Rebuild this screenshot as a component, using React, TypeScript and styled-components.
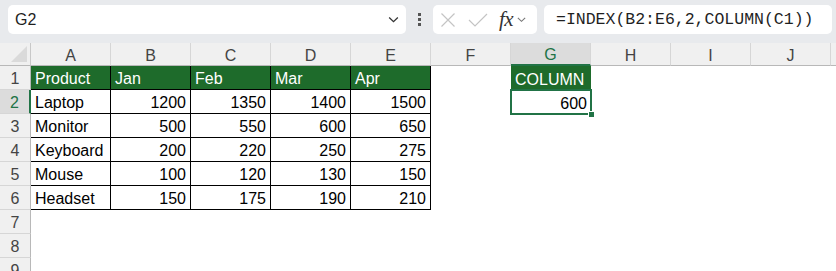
import styled, { createGlobalStyle } from "styled-components";

const GREEN = "#1e6b2b";
const SELECT = "#217346";

const GlobalStyle = createGlobalStyle`
  html, body {
    margin: 0;
    padding: 0;
    background: #ffffff;
  }
  body {
    font-family: "Liberation Sans", Arial, sans-serif;
    overflow: hidden;
  }
`;

const columns = ["A", "B", "C", "D", "E", "F", "G", "H", "I", "J"];

const data: (string | number)[][] = [
  ["Product", "Jan", "Feb", "Mar", "Apr"],
  ["Laptop", 1200, 1350, 1400, 1500],
  ["Monitor", 500, 550, 600, 650],
  ["Keyboard", 200, 220, 250, 275],
  ["Mouse", 100, 120, 130, 150],
  ["Headset", 150, 175, 190, 210],
];

const Page = styled.div`
  width: 836px;
  height: 271px;
  display: flex;
  flex-direction: column;
  overflow: hidden;
`;

const Toolbar = styled.div`
  height: 43px;
  flex-shrink: 0;
  background: #e8eaed;
  display: flex;
  align-items: flex-start;
  padding: 5px 0 0 8px;
  box-sizing: border-box;
`;

const Box = styled.div<{ $width: number }>`
  width: ${({ $width }) => $width}px;
  height: 29px;
  background: #ffffff;
  border-radius: 5px;
  box-sizing: border-box;
  display: flex;
  align-items: center;
  flex-shrink: 0;
`;

const NameText = styled.span`
  font-size: 16px;
  color: #1f1f1f;
  padding-left: 7px;
  flex: 1;
`;

const Grip = styled.div`
  width: 27px;
  display: flex;
  flex-direction: column;
  align-items: center;
  justify-content: center;
  gap: 2px;
  height: 29px;
  span {
    width: 3px;
    height: 3px;
    background: #555;
  }
`;

const Fx = styled.span`
  font-family: "Liberation Serif", "Times New Roman", serif;
  font-style: italic;
  font-size: 21px;
  color: #333;
  margin-left: 11px;
  letter-spacing: -0.5px;
`;

const FormulaText = styled.span`
  font-family: "Liberation Mono", "Courier New", monospace;
  font-size: 16.5px;
  color: #1f1f1f;
  padding-left: 12px;
  white-space: nowrap;
`;

const Sheet = styled.div`
  display: grid;
  grid-template-columns: 31px repeat(10, 80px) 1fr;
  grid-template-rows: 23px repeat(9, 24px);
  flex: none;
`;

const Corner = styled.div`
  background: #f0f0f0;
  border-right: 1px solid #c8c8c8;
  border-bottom: 1px solid #b8b8b8;
  box-sizing: border-box;
  position: relative;
  &::after {
    content: "";
    position: absolute;
    right: 3px;
    bottom: 3px;
    width: 0;
    height: 0;
    border-left: 16px solid transparent;
    border-bottom: 16px solid #dadada;
  }
`;

const ColHead = styled.div<{ $active?: boolean }>`
  background: ${({ $active }) => ($active ? "#dcdcdc" : "#f0f0f0")};
  color: ${({ $active }) => ($active ? SELECT : "#444")};
  border-right: 1px solid #d6d6d6;
  border-bottom: ${({ $active }) =>
    $active ? `2px solid ${SELECT}` : "1px solid #b8b8b8"};
  box-sizing: border-box;
  font-size: 16px;
  display: flex;
  align-items: center;
  justify-content: center;
  padding-top: 3px;
`;

const RowHead = styled.div<{ $active?: boolean }>`
  background: ${({ $active }) => ($active ? "#dcdcdc" : "#f0f0f0")};
  color: ${({ $active }) => ($active ? SELECT : "#444")};
  border-right: ${({ $active }) =>
    $active ? `2px solid ${SELECT}` : "1px solid #b8b8b8"};
  border-bottom: 1px solid #d6d6d6;
  box-sizing: border-box;
  font-size: 16px;
  display: flex;
  align-items: center;
  justify-content: center;
  padding-top: 2px;
`;

const Cell = styled.div<{ $kind: "head" | "data" | "empty"; $num?: boolean }>`
  box-sizing: border-box;
  font-size: 16px;
  display: flex;
  align-items: center;
  padding: 3px 4px 0 4px;
  white-space: nowrap;
  justify-content: ${({ $num }) => ($num ? "flex-end" : "flex-start")};
  background: ${({ $kind }) => ($kind === "head" ? GREEN : "#ffffff")};
  color: ${({ $kind }) => ($kind === "head" ? "#ffffff" : "#000000")};
  border-right: ${({ $kind }) =>
    $kind === "empty" ? "none" : "1px solid #000"};
  border-bottom: ${({ $kind }) =>
    $kind === "empty" ? "none" : "1px solid #000"};
`;

const ResultHead = styled(Cell)`
  border: none;
`;

const Selected = styled(Cell)`
  position: relative;
  border: none;
  &::after {
    content: "";
    position: absolute;
    top: -1px;
    left: -1px;
    right: -1px;
    bottom: -1px;
    border: 2px solid ${SELECT};
  }
  &::before {
    content: "";
    position: absolute;
    right: -4px;
    bottom: -4px;
    width: 5px;
    height: 5px;
    background: ${SELECT};
    border: 1px solid #fff;
    z-index: 2;
  }
`;

const Filler = styled.div`
  background: #f0f0f0;
  border-bottom: 1px solid #b8b8b8;
  box-sizing: border-box;
`;

const Chevron = ({ size = 12, color = "#333" }: { size?: number; color?: string }) => (
  <svg width={size} height={size} viewBox="0 0 12 12" fill="none">
    <path d="M2 4.2 L6 8 L10 4.2" stroke={color} strokeWidth="1.2" />
  </svg>
);

export default function App() {
  const renderCell = (r: number, c: number) => {
    const key = `${r}-${c}`;
    if (r < data.length && c < 5) {
      const v = data[r][c];
      return (
        <Cell key={key} $kind={r === 0 ? "head" : "data"} $num={typeof v === "number"}>
          {v}
        </Cell>
      );
    }
    if (r === 0 && c === 6) {
      return (
        <ResultHead key={key} $kind="head">
          COLUMN
        </ResultHead>
      );
    }
    if (r === 1 && c === 6) {
      return (
        <Selected key={key} $kind="data" $num>
          600
        </Selected>
      );
    }
    return <Cell key={key} $kind="empty" />;
  };

  return (
    <Page>
      <GlobalStyle />
      <Toolbar>
        <Box $width={398}>
          <NameText>G2</NameText>
          <span style={{ marginRight: 6, display: "flex" }}>
            <Chevron size={13} />
          </span>
        </Box>
        <Grip>
          <span />
          <span />
          <span />
        </Grip>
        <Box $width={104}>
          <svg width="16" height="16" viewBox="0 0 16 16" style={{ marginLeft: 7 }}>
            <path d="M1.5 1.5 L14.5 14.5 M14.5 1.5 L1.5 14.5" stroke="#c4c4c4" strokeWidth="1.2" />
          </svg>
          <svg width="20" height="16" viewBox="0 0 20 16" style={{ marginLeft: 12 }}>
            <path d="M1 8 L7 14 L19 2" stroke="#c4c4c4" strokeWidth="1.2" fill="none" />
          </svg>
          <Fx>fx</Fx>
          <span style={{ marginLeft: 3, display: "flex" }}>
            <Chevron size={11} color="#777" />
          </span>
        </Box>
        <Box $width={288} style={{ marginLeft: 7 }}>
          <FormulaText>=INDEX(B2:E6,2,COLUMN(C1))</FormulaText>
        </Box>
      </Toolbar>
      <Sheet>
        <Corner />
        {columns.map((col) => (
          <ColHead key={col} $active={col === "G"}>
            {col}
          </ColHead>
        ))}
        <Filler />
        {Array.from({ length: 9 }).map((_, r) => [
          <RowHead key={`rh-${r}`} $active={r === 1}>
            {r + 1}
          </RowHead>,
          ...columns.map((_, c) => renderCell(r, c)),
          <Cell key={`f-${r}`} $kind="empty" />,
        ])}
      </Sheet>
    </Page>
  );
}
